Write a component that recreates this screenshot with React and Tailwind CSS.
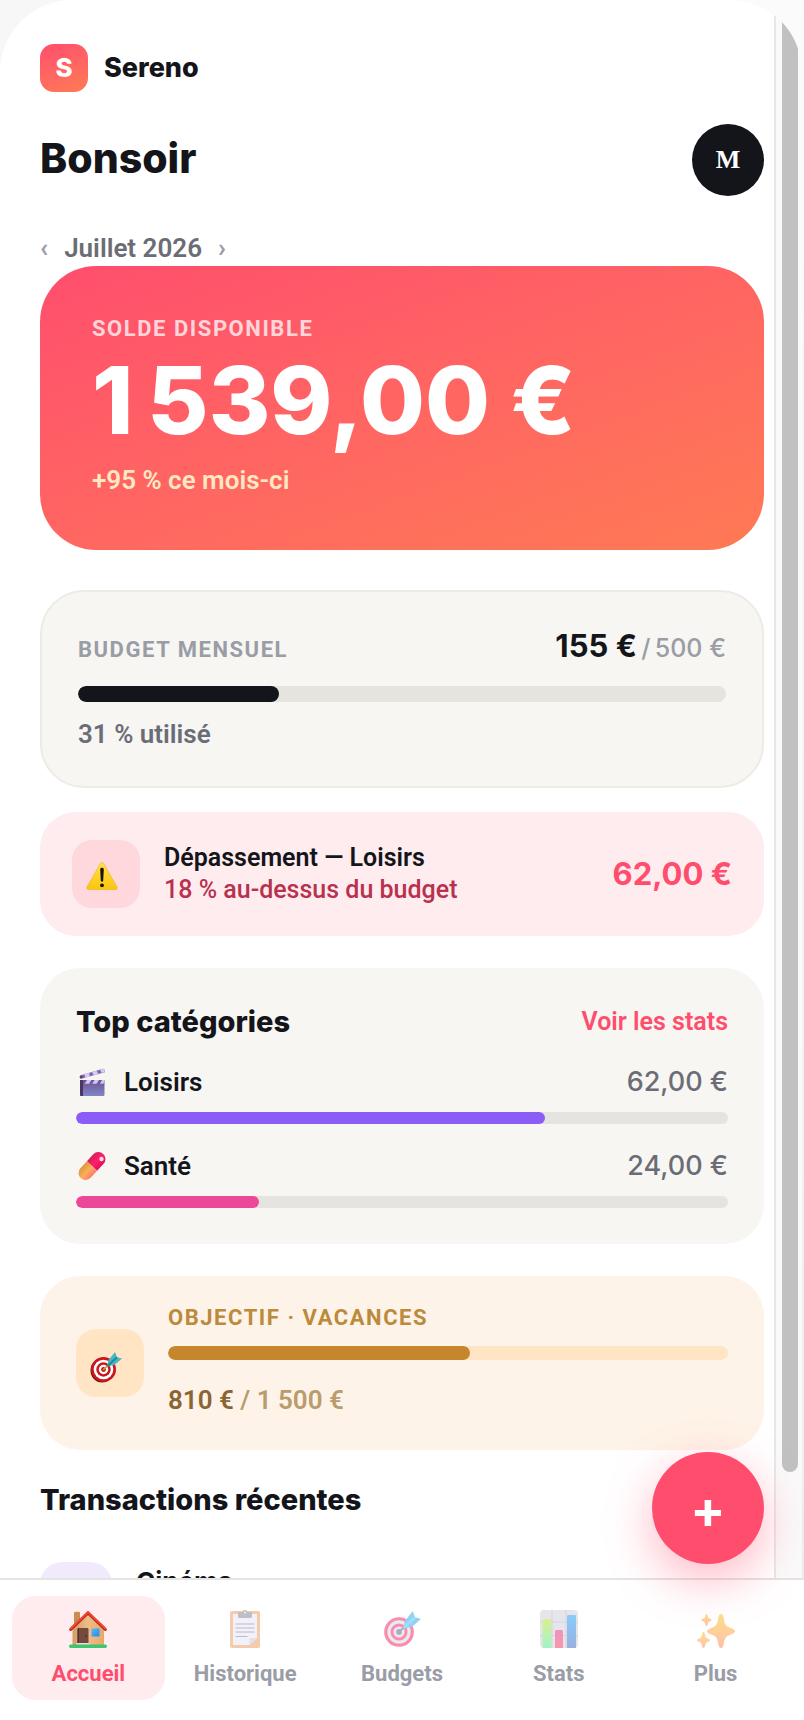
import React from "react";
import clsx from "clsx";

const display = "font-['Inter',sans-serif]";
const eyebrow = "text-[22px] font-bold tracking-[0.07em] uppercase";

function WarningIcon({ className }) {
  return (
    <svg viewBox="0 0 32 32" className={className} aria-hidden="true">
      <defs>
        <linearGradient id="warn" x1="0" y1="0" x2="0" y2="1">
          <stop offset="0" stopColor="#ffe14a" />
          <stop offset="1" stopColor="#fcc50b" />
        </linearGradient>
      </defs>
      <path d="M16 3.500c.7 0 1.200.4 1.600 1L31 28c.7 1.300 0 2.500-1.400 2.500H2.400C1 30.500.3 29.300 1 28L14.400 4.500c.4-.6.9-1 1.600-1z" fill="url(#warn)" stroke="#e9b41c" strokeWidth=".6" />
      <path d="M14.200 10.500c0-1.200.8-1.800 1.800-1.800s1.800.6 1.800 1.800l-.6 11c0 .8-.5 1.200-1.200 1.200s-1.200-.4-1.200-1.200z" fill="#16140c" />
      <circle cx="16" cy="26.300" r="1.900" fill="#16140c" />
    </svg>
  );
}

function ClapperIcon({ className }) {
  return (
    <svg viewBox="0 0 32 32" className={className} aria-hidden="true">
      <defs>
        <linearGradient id="clap" x1="0" y1="0" x2="0" y2="1">
          <stop offset="0" stopColor="#6f5290" />
          <stop offset="1" stopColor="#8086c8" />
        </linearGradient>
      </defs>
      <path d="M4 9.500 27 2.800c.6-.2 1.200.2 1.300.8l.6 2.600L5 12.800l-1.300-1.500z" fill="#8666ad" />
      <path d="m8.500 8.200 4.600-1.400.8 3.600-4.600 1.300zM16 6l4.500-1.300 1.800 3.300-4.500 1.300zM24 3.700l3-.9c.6-.1 1 .3 1.100.8l.5 2.500-2.800.8z" fill="#d3cdfa" />
      <path d="M4 14h24.500v14.500c0 1-.6 1.500-1.500 1.500H5.500c-1 0-1.500-.5-1.500-1.500z" fill="url(#clap)" />
      <path d="M4 14h3v16H5.500c-1 0-1.500-.5-1.500-1.500z" fill="#483763" />
      <path d="M11 14h4.500l-2.500 3.800H8.700zM18.500 14H23l-2.500 3.800h-4.200zM26 14h2.500v1.500l-1.200 2.300H24z" fill="#cdc8f6" />
      <circle cx="5.200" cy="11" r="1.500" fill="#594278" />
    </svg>
  );
}

function PillIcon({ className }) {
  return (
    <svg viewBox="0 0 32 32" className={className} aria-hidden="true">
      <defs>
        <linearGradient id="pillA" x1="0" y1="0" x2="1" y2="0">
          <stop offset="0" stopColor="#d61f55" />
          <stop offset=".5" stopColor="#ff1f6b" />
          <stop offset="1" stopColor="#e01258" />
        </linearGradient>
        <linearGradient id="pillB" x1="0" y1="0" x2="1" y2="0">
          <stop offset="0" stopColor="#d99a3e" />
          <stop offset=".55" stopColor="#ffad5c" />
          <stop offset="1" stopColor="#ff7a6d" />
        </linearGradient>
      </defs>
      <g transform="rotate(43 16 16)">
        <path d="M9 16V6.500a7 7 0 0 1 14 0V16z" fill="url(#pillA)" />
        <path d="M9 16v9.500a7 7 0 0 0 14 0V16z" fill="url(#pillB)" />
      </g>
      <circle cx="25.500" cy="9" r="2.200" fill="#ffd9ea" />
    </svg>
  );
}

function TargetIcon({ className, ring = "#c8161d", inner = "#fff", soft = false }) {
  return (
    <svg viewBox="0 0 32 32" className={className} aria-hidden="true">
      {!soft && <ellipse cx="12" cy="19.500" rx="11.500" ry="12" fill="#5f1512" />}
      <circle cx="13.500" cy="18.500" r="12.500" fill={ring} />
      <circle cx="13.500" cy="18.500" r="9.800" fill={inner} />
      <circle cx="13.500" cy="18.500" r="7.200" fill={ring} />
      <circle cx="13.500" cy="18.500" r="4.700" fill={inner} />
      <circle cx="13.500" cy="18.500" r="2.400" fill={soft ? "#6d6a80" : ring} />
      <path d="m13.500 18.500 9-8.500" stroke={soft ? "#5a6f96" : "#d89a2b"} strokeWidth="1.600" strokeLinecap="round" />
      <path d="M17 15.500 18.500 9 25 1l2 5.200L32 7.500 24.500 14z" fill={soft ? "#3fa9f0" : "#49b7c4"} />
      <path d="M17.500 15 27 6.200" stroke={soft ? "#3fd0f0" : "#1f8c9b"} strokeWidth="2.200" />
    </svg>
  );
}

function HouseIcon({ className }) {
  return (
    <svg viewBox="0 0 38 38" className={className} aria-hidden="true">
      <defs>
        <linearGradient id="wall" x1="0" y1="0" x2="1" y2="0">
          <stop offset="0" stopColor="#d59b62" />
          <stop offset=".5" stopColor="#f0bd88" />
          <stop offset="1" stopColor="#e5a868" />
        </linearGradient>
        <linearGradient id="pane" x1="0" y1="0" x2="1" y2="1">
          <stop offset="0" stopColor="#56bdf8" />
          <stop offset="1" stopColor="#2287ec" />
        </linearGradient>
      </defs>
      <path d="M5 2.500C5 1.500 11 1.500 11 2.500V15H5z" fill="#c98d50" />
      <path d="M3.500 17 19 3l16 15v17H3.500z" fill="url(#wall)" />
      <path d="M1.700 19.500 19 3l17.300 16.500" fill="none" stroke="#b8231c" strokeWidth="3" strokeLinecap="round" strokeLinejoin="round" />
      <path d="M1.700 18.500 19 2l17.300 16.500" fill="none" stroke="#f04a36" strokeWidth="2" strokeLinecap="round" strokeLinejoin="round" />
      <path d="M8.500 19.500c0-1 .5-1.500 1.500-1.500h8c1 0 1.500.5 1.500 1.500V35h-11z" fill="#76493f" />
      <path d="M8.500 19.500c0-1 .5-1.500 1.500-1.500V35H8.500z" fill="#52302b" />
      <circle cx="17" cy="26" r=".8" fill="#3a211d" />
      <path d="M7.500 33h13v2h-13z" fill="#e9ddd6" />
      <rect x="22.500" y="18.500" width="8" height="8" rx=".6" fill="url(#pane)" />
      <rect x="0" y="34.500" width="38" height="3.500" rx="1.700" fill="#3fc46f" />
    </svg>
  );
}

function ClipboardIcon({ className }) {
  return (
    <svg viewBox="0 0 38 38" className={className} aria-hidden="true">
      <rect x="4" y="1" width="30" height="37" rx="2" fill="#eda468" />
      <path d="M7 4h24v24l-7.500 7H7z" fill="#e9e6f5" />
      <path d="M31 28h-6.500c-.7 0-1 .3-1 1v6z" fill="#cdc8dc" />
      <path d="M12 3.500c0-1 .8-1.500 1.800-1.500h2.400a3 3 0 0 1 5.600 0h2.400c1 0 1.800.5 1.800 1.500v3c0 1-.8 1.500-1.800 1.500H13.800c-1 0-1.800-.5-1.800-1.500z" fill="#8b8997" />
      <circle cx="19" cy="2.600" r="1" fill="#e9e6f5" />
      <path d="M10 14h18M10 18h18M10 22h18M10 26.500h11" stroke="#85829b" strokeWidth="1.200" strokeLinecap="round" />
    </svg>
  );
}

function ChartIcon({ className }) {
  return (
    <svg viewBox="0 0 38 38" className={className} aria-hidden="true">
      <defs>
        <linearGradient id="barA" x1="0" y1="0" x2="0" y2="1">
          <stop offset="0" stopColor="#b9e534" />
          <stop offset="1" stopColor="#58ea9c" />
        </linearGradient>
        <linearGradient id="barB" x1="0" y1="0" x2="0" y2="1">
          <stop offset="0" stopColor="#e23c8a" />
          <stop offset="1" stopColor="#fb3f66" />
        </linearGradient>
        <linearGradient id="barC" x1="0" y1="0" x2="0" y2="1">
          <stop offset="0" stopColor="#2ba2f7" />
          <stop offset="1" stopColor="#4472c8" />
        </linearGradient>
      </defs>
      <rect width="38" height="38" rx="4" fill="#d5d1de" />
      <path d="M12 0v38M26 0v38M0 12h38M0 25.500h38" stroke="#b4b0c2" strokeWidth="1" />
      <path d="M2.500 38V10.500C2.500 9.500 3 9 4 9h6c1 0 1.500.5 1.500 1.500V38z" fill="url(#barA)" />
      <path d="M15 38V21.500c0-1 .5-1.500 1.500-1.500h5c1 0 1.500.5 1.500 1.500V38z" fill="url(#barB)" />
      <path d="M27 38V6.500C27 5.500 27.500 5 28.500 5h6c1 0 1.500.5 1.500 1.500V38z" fill="url(#barC)" />
    </svg>
  );
}

function SparklesIcon({ className }) {
  return (
    <svg viewBox="0 0 38 38" className={className} aria-hidden="true">
      <defs>
        <linearGradient id="spark" x1="0" y1="0" x2="0" y2="1">
          <stop offset="0" stopColor="#fbc630" />
          <stop offset=".55" stopColor="#ffa84a" />
          <stop offset="1" stopColor="#ff8a68" />
        </linearGradient>
      </defs>
      <g fill="url(#spark)">
        <path d="M24 4c1.600 0 2.300 1.200 2.800 4.500.9 6 1.700 7.500 7 9.500 2.800 1 4.200 1.800 4.200 3.200s-1.400 2.100-4.200 3.200c-5.300 2-6.100 3.600-7 9.300-.5 3.200-1.200 4.300-2.800 4.300s-2.300-1.100-2.800-4.300c-.9-5.700-1.700-7.300-7-9.300-2.800-1.100-4.200-1.800-4.200-3.200s1.400-2.200 4.200-3.200c5.300-2 6.100-3.500 7-9.500C21.700 5.200 22.400 4 24 4z" />
        <path d="M9.500 4c.8 0 1 1 1.300 2.200.4 1.700.8 2.100 2.200 2.600 1 .3 1.500.6 1.500 1.200s-.5.900-1.500 1.200c-1.400.5-1.800.9-2.200 2.600-.3 1.200-.5 2.200-1.300 2.200s-1-1-1.300-2.200c-.4-1.700-.8-2.100-2.200-2.600-1-.3-1.500-.6-1.500-1.200s.5-.9 1.500-1.200c1.400-.5 1.800-.9 2.200-2.600C8.500 5 8.700 4 9.500 4z" />
        <path d="M6.500 22c1 0 1.300 1.300 1.600 3 .5 2.300 1 2.900 3 3.700 1.200.5 1.900.8 1.900 1.500s-.7 1-1.900 1.500c-2 .8-2.500 1.400-3 3.500-.3 1.700-.6 2.800-1.600 2.800s-1.300-1.100-1.600-2.800c-.5-2.100-1-2.700-3-3.500C.7 31.200 0 30.900 0 30.200s.7-1 1.900-1.500c2-.8 2.500-1.400 3-3.700.3-1.700.6-3 1.600-3z" />
      </g>
    </svg>
  );
}

function Progress({ value, label, track, fill }) {
  return (
    <div
      role="progressbar"
      aria-label={label}
      aria-valuenow={value}
      aria-valuemin={0}
      aria-valuemax={100}
      className={clsx("w-full rounded-full overflow-hidden", track)}
    >
      <div className={clsx("h-full rounded-full", fill)} style={{ width: `${value}%` }} />
    </div>
  );
}

const categories = [
  { name: "Loisirs", amount: "62,00 €", value: 72, fill: "bg-[#8b5cf6]", Icon: ClapperIcon },
  { name: "Santé", amount: "24,00 €", value: 28, fill: "bg-[#ec4899]", Icon: PillIcon },
];

const tabs = [
  { label: "Accueil", icon: <HouseIcon className="size-[38px]" />, active: true },
  { label: "Historique", icon: <ClipboardIcon className="size-[38px]" /> },
  { label: "Budgets", icon: <TargetIcon className="size-[38px]" ring="#f5316b" inner="#dcd8e8" soft /> },
  { label: "Stats", icon: <ChartIcon className="size-[38px]" /> },
  { label: "Plus", icon: <SparklesIcon className="size-[38px]" /> },
];

export default function App() {
  return (
    <div className="relative flex flex-col h-screen overflow-hidden bg-linear-to-br from-[#f7f7f7] via-[#fbfbfb] to-[#ececec] font-['Roboto',sans-serif] text-[26px] leading-8 text-[#14151a]">
      <div className="flex flex-1 min-h-0 mr-0.5 rounded-t-[72px] overflow-hidden bg-white">
        <main className="flex-1 min-w-0 overflow-hidden pt-11 pl-10 pr-2.5">
          {/* Brand */}
          <div className="flex items-center gap-4">
            <div className={clsx("flex items-center justify-center size-12 rounded-[14px] bg-linear-160 from-[#ff4d6d] to-[#ff7a54] text-white font-extrabold", display)}>
              S
            </div>
            <span className={clsx("text-[27px] font-extrabold", display)}>Sereno</span>
          </div>

          {/* Greeting */}
          <header className="flex items-center justify-between mt-8">
            <h1 className={clsx("text-[41px] leading-[48px] font-extrabold pb-1", display)}>Bonsoir</h1>
            <button
              type="button"
              aria-label="Profil"
              className="size-[72px] rounded-full bg-[#14151a] text-white font-bold font-['Liberation_Serif',serif]"
            >
              M
            </button>
          </header>

          <div className="flex items-center gap-4 mt-9 mb-0.5 font-semibold text-[#6b6d76]">
            <button type="button" aria-label="Mois précédent" className="font-bold text-[#9a9ca6]">‹</button>
            <span>Juillet 2026</span>
            <button type="button" aria-label="Mois suivant" className="font-bold text-[#9a9ca6]">›</button>
          </div>

          {/* Balance */}
          <section className="rounded-[56px] bg-linear-160 from-[#ff4d6d] to-[#ff7a54] px-[52px] pt-12 pb-[54px] text-white">
            <h2 className={clsx("leading-[30px] text-white/75", eyebrow)}>Solde disponible</h2>
            <p className={clsx("mt-2 text-[94px] leading-[96px] font-extrabold whitespace-nowrap", display)}>1&#8239;539,00&nbsp;€</p>
            <p className="mt-4 font-semibold text-[#ffe8c2]">+95&nbsp;% ce mois-ci</p>
          </section>

          {/* Monthly budget */}
          <section className="mt-10 rounded-[44px] border-2 border-[#ecebe4] bg-[#f7f6f2] px-9 pt-[34px] pb-9">
            <div className="flex items-baseline justify-between leading-10">
              <h2 className={clsx("text-[#9a9ca6]", eyebrow)}>Budget mensuel</h2>
              <p className={clsx("text-[25px] font-medium text-[#9a9ca6]", display)}>
                <span className="text-[31px] font-bold text-[#14151a]">155&nbsp;€</span>&#8239;/&#8239;500&nbsp;€
              </p>
            </div>
            <div className="mt-4">
              <Progress value={31} label="Budget mensuel" track="h-4 bg-[#e5e4df]" fill="bg-[#14151a]" />
            </div>
            <p className="mt-4 font-semibold text-[#6b6d76]">31&nbsp;% utilisé</p>
          </section>

          {/* Overspend alert */}
          <section className="mt-6 flex items-center gap-6 rounded-[36px] bg-[#ffecee] px-8 py-7">
            <div className="flex items-center justify-center size-[68px] pr-2 pt-0.5 shrink-0 rounded-[20px] bg-[#ffd8de]">
              <WarningIcon className="size-8" />
            </div>
            <div className="flex-1 min-w-0 text-[25px]">
              <h3 className="font-semibold">Dépassement — Loisirs</h3>
              <p className="font-medium text-[#b83250]">18&nbsp;% au-dessus du budget</p>
            </div>
            <span className={clsx("text-[31px] font-bold text-[#ff4d6d]", display)}>62,00&nbsp;€</span>
          </section>

          {/* Categories */}
          <section className="mt-8 rounded-[40px] bg-[#f7f6f2] p-9">
            <div className="flex items-center justify-between leading-9">
              <h2 className={clsx("text-[29px] font-extrabold", display)}>Top catégories</h2>
              <a href="#stats" className="text-[25px] font-semibold text-[#ff4d6d]">Voir les stats</a>
            </div>
            {categories.map(({ name, amount, value, fill, Icon }) => (
              <div key={name} className="mt-[26px]">
                <div className="flex items-center justify-between mb-3.5">
                  <span className="flex items-center gap-4 font-semibold">
                    <Icon className="size-8" />
                    {name}
                  </span>
                  <span className={clsx("text-[27px] font-medium text-[#6b6d76]", display)}>{amount}</span>
                </div>
                <Progress value={value} label={name} track="h-3 bg-[#e5e4df]" fill={fill} />
              </div>
            ))}
          </section>

          {/* Savings goal */}
          <section className="mt-8 flex items-center gap-6 rounded-[40px] bg-[#fef3e8] px-9 py-7">
            <div className="flex items-center justify-center size-[68px] pr-2 pt-2 shrink-0 rounded-[20px] bg-[#ffe5c4]">
              <TargetIcon className="size-8" />
            </div>
            <div className="flex-1 min-w-0 pb-1.5">
              <h3 className={clsx("leading-7 text-[#bb8a3c]", eyebrow)}>Objectif · Vacances</h3>
              <div className="mt-3.5">
                <Progress value={54} label="Objectif vacances" track="h-3.5 bg-[#ffe5c4]" fill="bg-[#c6862e]" />
              </div>
              <p className="mt-6 font-semibold text-[#b99c6c]">
                <span className="text-[#8a6534]">810&nbsp;€</span> / 1&nbsp;500&nbsp;€
              </p>
            </div>
          </section>

          {/* Recent transactions */}
          <section className="mt-8">
            <h2 className={clsx("text-[29px] leading-9 font-extrabold", display)}>Transactions récentes</h2>
            <div className="flex items-start gap-6 mt-11">
              <div className="size-[72px] shrink-0 rounded-[22px] bg-[#f1eafc]" />
              <span className={clsx("pt-1 font-bold", display)}>Cinéma</span>
            </div>
          </section>
        </main>

        {/* Scroll gutter */}
        <div className="w-7 shrink-0 border-l-2 border-[#e8e8e8] bg-[#fafafa] pl-1.5 pb-[106px]" aria-hidden="true">
          <div className="w-4 h-full rounded-full bg-[#c1c1c1]" />
        </div>
      </div>

      <nav className="flex gap-1 shrink-0 border-t-2 border-[#e5e4df] bg-white px-3 pt-4 pb-5">
        {tabs.map((tab) => (
          <button
            key={tab.label}
            type="button"
            aria-current={tab.active ? "page" : undefined}
            className={clsx(
              "flex-1 flex flex-col items-center gap-3 pt-3.5 pb-3 rounded-3xl text-[22px] leading-7 font-bold",
              tab.active ? "bg-[#ffecee] text-[#ff4d6d]" : "text-[#9a9ca6]"
            )}
          >
            <span className={tab.active ? "" : "opacity-55"}>{tab.icon}</span>
            {tab.label}
          </button>
        ))}
      </nav>

      {/* Add transaction */}
      <button
        type="button"
        aria-label="Ajouter"
        className={clsx("absolute right-10 bottom-[156px] size-28 pt-1 rounded-full bg-[#ff4d6d] text-white text-[52px] font-bold shadow-[0_16px_48px_rgba(255,77,109,0.4)]", display)}
      >
        +
      </button>
    </div>
  );
}
